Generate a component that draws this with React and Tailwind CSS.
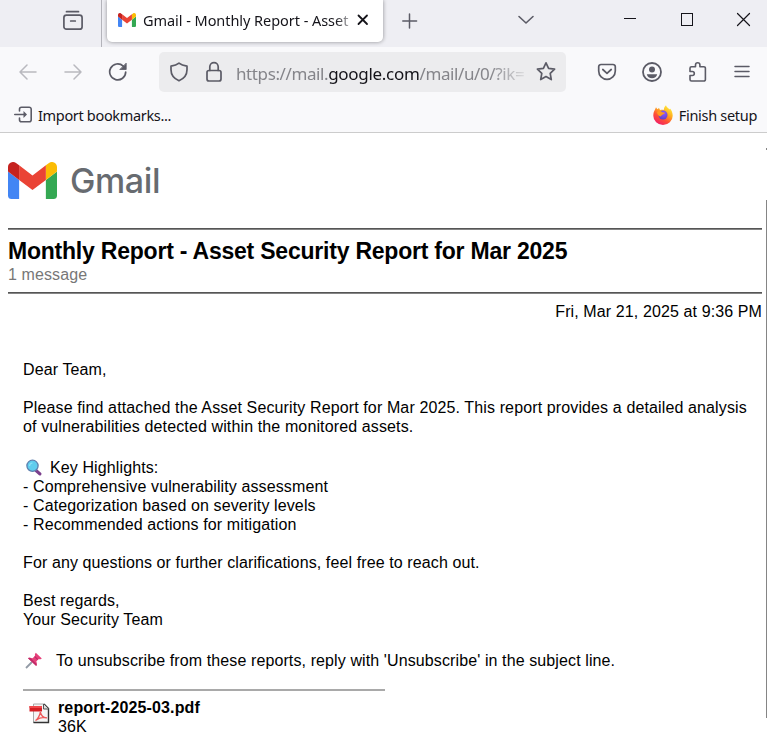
import React from "react";

const Ico = ({ w = 20, h = 20, vb, className = "", sw = 1.5, children }) => (
  <svg width={w} height={h} viewBox={vb || `0 0 ${w} ${h}`} fill="none" stroke="currentColor" strokeWidth={sw} strokeLinecap="round" strokeLinejoin="round" className={`shrink-0 ${className}`}>
    {children}
  </svg>
);

const GmailMark = ({ w, h }) => (
  <svg width={w} height={h} viewBox="52 42 88 66" preserveAspectRatio="none" className="shrink-0">
    <path fill="#4285f4" d="M58 108h14V74L52 59v43c0 3.32 2.69 6 6 6" />
    <path fill="#34a853" d="M120 108h14c3.32 0 6-2.69 6-6V59l-20 15" />
    <path fill="#fbbc04" d="M120 48v26l20-15v-8c0-7.42-8.47-11.65-14.4-7.2" />
    <path fill="#ea4335" d="M72 74V48l24 18 24-18v26L96 92" />
    <path fill="#c5221f" d="M52 51v8l20 15V48l-5.600-4.200c-5.940-4.450-14.400-.220-14.400 7.200" />
  </svg>
);

const Firefox = () => (
  <svg width="20" height="20" viewBox="0 0 20 20" className="shrink-0">
    <defs>
      <linearGradient id="fx" x1="0.85" y1="0.05" x2="0.25" y2="1">
        <stop offset="0" stopColor="#fff13d" />
        <stop offset="0.35" stopColor="#ffae20" />
        <stop offset="0.65" stopColor="#ff5035" />
        <stop offset="1" stopColor="#ef1b6c" />
      </linearGradient>
      <radialGradient id="fp" cx="0.6" cy="0.3" r="0.8">
        <stop offset="0" stopColor="#9059ff" />
        <stop offset="1" stopColor="#5b3bc4" />
      </radialGradient>
    </defs>
    <path fill="url(#fx)" d="M1.800 5 3 2.300 4.300 4.300 6 3l1 2c1.400-.400 3-.300 4-.200C10.800 3 11.700 1.400 13 .3c.300 2 2.300 2.800 3.700 4.200l.300-1c1.700 2 2.700 4.600 2.700 7.200A9.700 9.300 0 0 1 .3 10.700C.3 8.500.8 6.500 1.800 5z" />
    <circle cx="10" cy="10" r="4.500" fill="url(#fp)" />
    <path fill="#ff9a20" d="M4 7.500C5.500 5.700 8 5.700 9.200 7.300L12 7.700c-.4 1.400-2 1.500-3 2.200-.8.600-.8 1.500-1.700 1.500-1.500 0-2.700-2-3.300-3.900z" />
  </svg>
);

const Magnifier = () => (
  <svg width="18" height="18" viewBox="0 0 18 18" className="shrink-0">
    <path d="M11 11.500 15 15" stroke="#7b3f8c" strokeWidth="3" strokeLinecap="round" />
    <circle cx="7.500" cy="6.800" r="5.600" fill="#5fcdee" stroke="#5c7fae" strokeWidth="1.300" />
    <path d="M4.500 7a3.200 3.200 0 0 1 3-3" stroke="#8be0f8" strokeWidth="1.200" fill="none" />
  </svg>
);

const Pin = () => (
  <svg width="18" height="18" viewBox="0 0 18 18" className="shrink-0">
    <path d="M1 16 7 10" stroke="#929aa5" strokeWidth="1.800" />
    <path fill="#e6407a" d="M3 6.200c1.700-.900 3.200-.500 4.500.1L10 4.100c-.300-1.400 0-2.500.8-3.300l6 5.600c-.9.800-2.200 1-3.500.8l-2 2.300c.8 1.500.8 3.100-.1 4.600z" />
    <path fill="#c02a68" d="M3 6.200 11.200 14.100c.4-.6.500-1.300.5-2L5.500 5.900C4.500 5.700 3.700 5.800 3 6.200zM10 4.100l3.300 3.100-.8.900L9.200 4.900z" />
  </svg>
);

const PdfIcon = () => (
  <svg width="21" height="21" viewBox="0 0 21 21" className="shrink-0">
    <path d="M4.500 1H15l4.500 4.500V19.500h-15z" fill="#f5f5f5" stroke="#aaa" />
    <path d="M15 1l4.500 4.500V19.500H4.500" fill="none" stroke="#333" strokeWidth="1.400" />
    <path d="M14.500 1v5h5" fill="#ddd" stroke="#555" />
    <path d="M.5 3h12.500v5.500H.5z" fill="#d51f24" />
    <path d="M.5 3h12.500v2H.5z" fill="#f0494c" />
    <path d="M6.500 17.500c2-1 4.500-5 4.800-8.500 1 4 3.500 6 6.700 5.800-4-.9-8 .2-11.500 2.700z" fill="none" stroke="#ee5a5a" strokeWidth="1.300" />
  </svg>
);

function TabStrip() {
  return (
    <div className="flex h-[47px] bg-[#eeeef3] text-[#5b5b66]">
      <div className="flex w-[102px] shrink-0 border-r border-[#b3b3ba] pl-[62px] pt-[10px]">
        <Ico w={22} h={22} sw={1.7}>
          <path d="M4.500 1.700h12" />
          <rect x="1.900" y="5.200" width="18.200" height="14" rx="2.500" />
          <path d="M8.700 11h4.600" />
        </Ico>
      </div>
      <div className="ml-[5px] flex h-[42px] w-[276px] shrink-0 items-center rounded-b-[5px] bg-white pb-0.5 pl-[11px] shadow-[0_0_4px_rgba(0,0,0,0.4)]">
        <GmailMark w={18} h={14} />
        <div className="ml-[7px] w-[207px] overflow-hidden whitespace-nowrap bg-[linear-gradient(90deg,#15141a_93%,#b5b5b8_100%)] bg-clip-text font-['Noto_Sans',sans-serif] text-[14.5px] tracking-[-0.05px] text-transparent">Gmail - Monthly Report - Asset</div>
        <Ico w={12} h={12} sw={1.8} className="ml-[7px] text-[#15141a]">
          <path d="M1.500 1.500 10 10M10 1.500 1.500 10" />
        </Ico>
      </div>
      <Ico w={16} h={16} className="ml-[19px] mt-[13px]">
        <path d="M7.500 1v14M.8 8h13.800" />
      </Ico>
      <Ico w={18} h={10} sw={1.6} className="ml-[99px] mt-[15px]">
        <path d="m2 1.500 7 6.500L16 1.500" />
      </Ico>
      <div className="ml-[89px] mt-[18px] h-px w-3 bg-[#15141a]" />
      <div className="ml-[45px] mt-[13px] h-[13px] w-3 border border-[#15141a]" />
      <Ico w={15} h={15} sw={1.2} className="ml-[43px] mt-3 text-[#15141a]">
        <path d="m1.500 1.500 12 12M13.500 1.500l-12 12" />
      </Ico>
    </div>
  );
}

function Toolbar() {
  return (
    <div className="flex h-[50px] items-center bg-[#f9f9fb] text-[#5b5b66]">
      <Ico w={18} h={16} className="ml-[19px] text-[#b9b9bf]">
        <path d="M17 8H1M8 1 1 8l7 7" />
      </Ico>
      <Ico w={18} h={16} className="ml-[27px] text-[#b9b9bf]">
        <path d="M1 8h16M10 1l7 7-7 7" />
      </Ico>
      <Ico w={20} h={20} sw={1.7} className="ml-[26px]">
        <path d="M17.700 10a8 8 0 1 1-2.500-5.900" />
        <path d="M18.200 1.500v6h-6z" fill="currentColor" strokeWidth="0.800" />
      </Ico>
      <div className="ml-[31px] flex h-10 w-[407px] shrink-0 items-center rounded-[5px] bg-[#ececee] pl-[10px]">
        <Ico w={20} h={20} sw={1.7}>
          <path d="M10 1.200c2 1.600 4.600 2.500 8 3v3.600c0 4.900-3.400 9-8 11-4.600-2-8-6.100-8-11V4.200c3.400-.5 6-1.400 8-3z" />
        </Ico>
        <Ico w={18} h={22} sw={1.700} className="ml-4">
          <rect x="2" y="9.500" width="14" height="10.500" rx="2" />
          <path d="M4.800 9.500V5.800a4.200 4.200 0 0 1 8.400 0v3.700" />
        </Ico>
        <div className="ml-[13px] w-[289px] overflow-hidden whitespace-nowrap pt-[3px] font-['Noto_Sans',sans-serif] text-[17px] leading-6 tracking-[-0.4px] text-[#85858a] [mask-image:linear-gradient(90deg,#000_88%,transparent_102%)]">
          https://mail.<span className="tracking-[-0.3px] text-[#15141a]">google.com</span>/mail/u/0/?ik=
        </div>
        <Ico w={22} h={22} sw={1.7} className="ml-[10px]">
          <path d="m11 1.800 2.600 5.600 6 .8-4.400 4.200 1.100 6.200L11 15.600l-5.300 3 1.100-6.200L2.400 8.200l6-.8z" />
        </Ico>
      </div>
      <Ico w={20} h={18} sw={1.700} className="ml-[31px]">
        <path d="M4 1.500h12a2.300 2.300 0 0 1 2.300 2.300V8A8.300 8.300 0 0 1 1.700 8V3.800A2.300 2.300 0 0 1 4 1.500zM5.800 6.500 10 10.300l4.200-3.800" />
      </Ico>
      <Ico w={22} h={22} sw={1.800} className="ml-[24px]">
        <circle cx="11" cy="11" r="9" />
        <circle cx="11" cy="8.500" r="3" fill="currentColor" stroke="none" />
        <path d="M5.800 13.200h10.400c-.5 2.400-2.600 4-5.200 4s-4.700-1.600-5.200-4z" fill="currentColor" stroke="none" />
      </Ico>
      <Ico w={20} h={22} sw={1.600} className="ml-[25px]">
        <path d="M2 7.200a1.500 1.500 0 0 1 1.500-1.500h4V4a2.200 2.200 0 0 1 4.400 0v1.700h4a1.500 1.500 0 0 1 1.500 1.500v11.300a1.500 1.500 0 0 1-1.500 1.500H3.500A1.500 1.500 0 0 1 2 18.500v-4h2.300a2 2 0 0 0 0-4H2z" />
      </Ico>
      <Ico w={16} h={14} sw={1.5} className="ml-[26px]">
        <path d="M1 1.500h14M1 6.500h14M1 11.500h14" />
      </Ico>
    </div>
  );
}

function BookmarksBar() {
  return (
    <div className="flex h-9 items-center border-b border-[#cccccc] bg-[#f9f9fb] pl-[14px] pr-[10px] font-['Noto_Sans',sans-serif] text-[14.5px] text-[#15141a]">
      <Ico w={18} h={17} sw={1.6} className="text-[#5b5b66]">
        <path d="M5.500 5V3.200a2 2 0 0 1 2-2h7.700a2 2 0 0 1 2 2v10.600a2 2 0 0 1-2 2H7.500a2 2 0 0 1-2-2V12M.8 8.500H11" />
        <path d="M9.500 5v7l3.500-3.500z" fill="currentColor" stroke="none" />
      </Ico>
      <span className="ml-[6px] pt-0.5 tracking-[-0.33px]">Import bookmarks...</span>
      <div className="ml-auto flex items-center gap-[6px]">
        <Firefox />
        <span className="pt-0.5 tracking-[-0.3px]">Finish setup</span>
      </div>
    </div>
  );
}

export default function App() {
  return (
    <div className="relative h-[742px] w-[767px] overflow-hidden bg-white font-['Liberation_Sans',Arial,sans-serif] text-base leading-[19px] tracking-[0.11px] text-black">
      <TabStrip />
      <Toolbar />
      <BookmarksBar />
      <main className="pl-2 pr-[5px]">
        <div className="flex h-[95px] items-start pt-[29px]">
          <GmailMark w={49} h={37} />
          <span className="ml-[13px] font-['Inter',sans-serif] text-[34px] font-medium leading-[38px] tracking-[-0.4px] text-[#676b70]">Gmail</span>
        </div>
        <div className="h-0.5 border-t border-[#555] bg-[#858585]" />
        <h1 className="mt-2 text-[23px] font-bold leading-[27px] tracking-[-0.22px]">Monthly Report - Asset Security Report for Mar 2025</h1>
        <div className="text-[#777]">1 message</div>
        <div className="mt-2 h-0.5 border-t border-[#555] bg-[#858585]" />
        <div className="mt-2 text-right">Fri, Mar 21, 2025 at 9:36 PM</div>
        <div className="pl-[15px] pt-[39px]">
          <p>Dear Team,</p>
          <p className="mt-[19px] tracking-[0.125px]">Please find attached the Asset Security Report for Mar 2025. This report provides a detailed analysis<br />of vulnerabilities detected within the monitored assets.</p>
          <div className="mt-[22px] flex h-[19px] items-center pl-[2px]">
            <Magnifier />
            <span className="ml-[7px]">Key Highlights:</span>
          </div>
          <p>- Comprehensive vulnerability assessment</p>
          <p>- Categorization based on severity levels</p>
          <p>- Recommended actions for mitigation</p>
          <p className="mt-[19px]">For any questions or further clarifications, feel free to reach out.</p>
          <p className="mt-[19px]">Best regards,</p>
          <p>Your Security Team</p>
          <div className="mt-[22px] flex h-[19px] items-center pl-[2px]">
            <Pin />
            <span className="ml-[13px]">To unsubscribe from these reports, reply with 'Unsubscribe' in the subject line.</span>
          </div>
          <div className="mt-[19px] h-0.5 w-[362px] bg-[#a9a9a9]" />
          <div className="mt-[7px] flex items-start pl-[6px]">
            <div className="pt-[5px]">
              <PdfIcon />
            </div>
            <div className="ml-2">
              <div className="font-bold tracking-[0.13px]">report-2025-03.pdf</div>
              <div>36K</div>
            </div>
          </div>
        </div>
      </main>
      <div className="absolute right-0 top-[148px] h-0.5 w-px bg-[#858585]" />
      <div className="absolute right-0 top-[200px] h-[518px] w-px bg-[#858585]" />
    </div>
  );
}
